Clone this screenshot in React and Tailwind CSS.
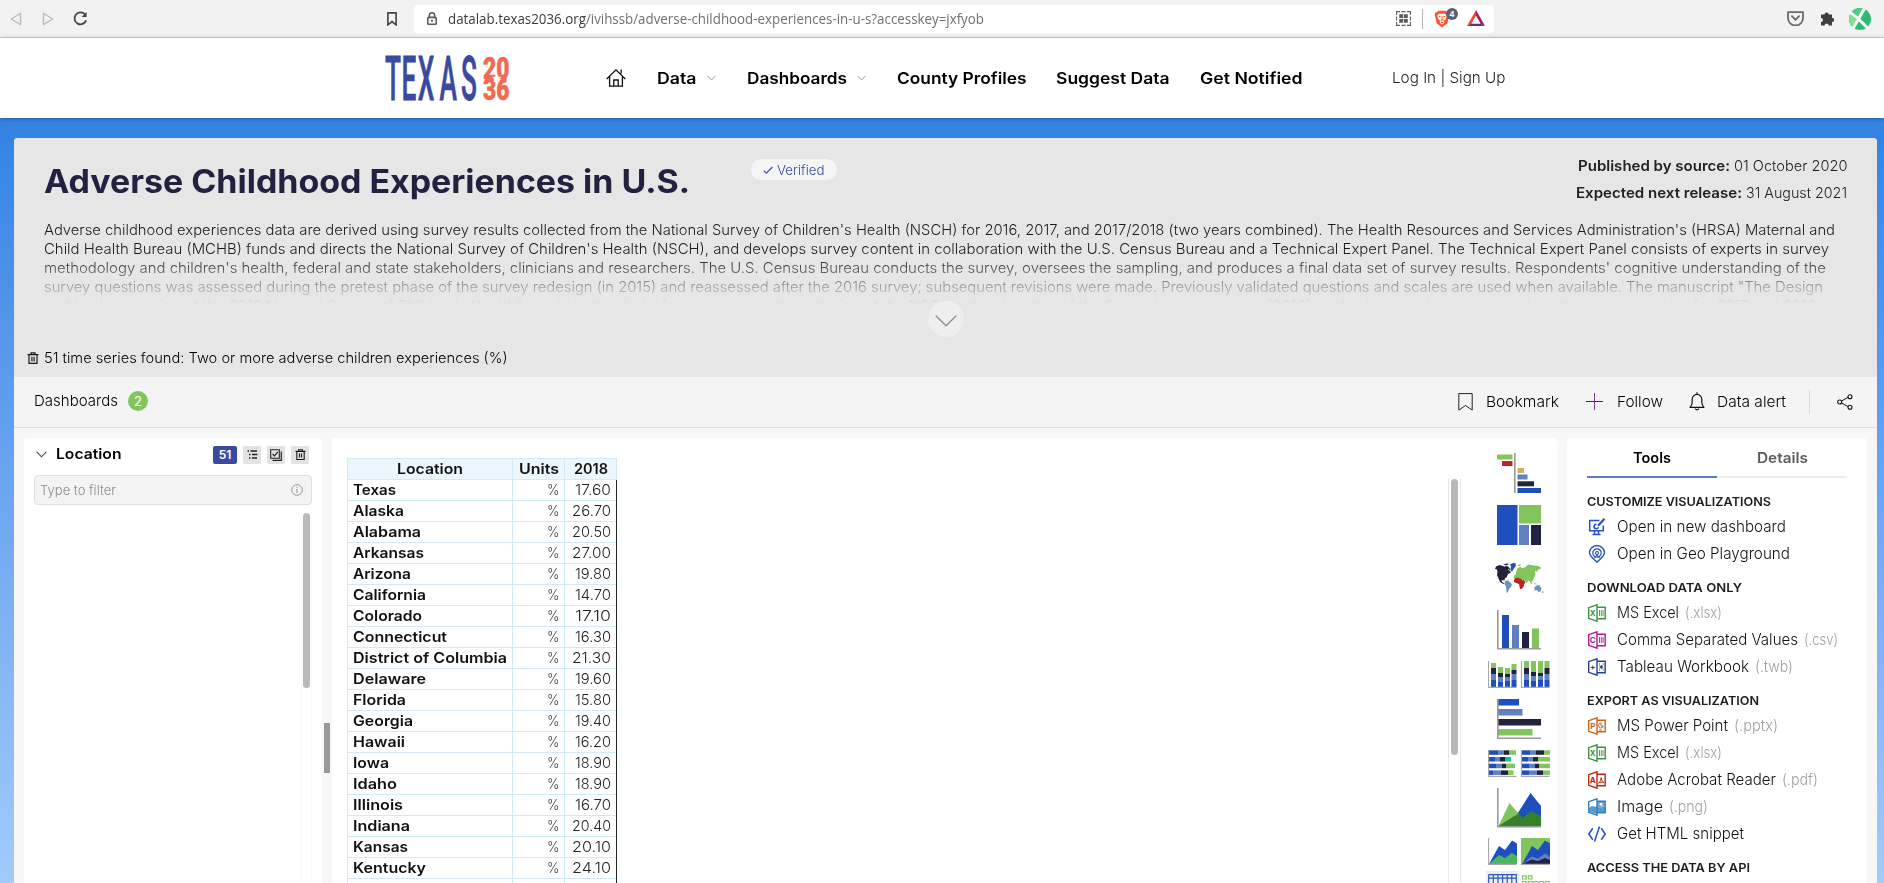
import React, { useLayoutEffect, useRef } from "react";

const BLUE = "#1f4fbf", MID = "#6080c0", NAVY = "#222140", GREEN = "#82c55d", GREY = "#9a9a9a";

/* One line of text, its letters widened so that it fills the given advance width. */
function T({ w, className = "", children }) {
  const box = useRef(null);
  const ink = useRef(null);
  useLayoutEffect(() => {
    if (!box.current || !w) return;
    ink.current.style.transform = "none";
    const natural = ink.current.getBoundingClientRect().width;
    box.current.style.width = w + "px";
    ink.current.style.transform = `scaleX(${w / natural})`;
  }, [w, children]);
  return (
    <span ref={box} className={"inline-block shrink-0 whitespace-nowrap text-left align-top " + className}>
      <span ref={ink} className="inline-block origin-left align-top">{children}</span>
    </span>
  );
}

function Svg({ w, h, className = "", children }) {
  return <svg width={w} height={h} viewBox={`0 0 ${w} ${h}`} fill="none" className={"block shrink-0 " + className}>{children}</svg>;
}

const Trash = ({ s = 12 }) => (
  <svg width={s} height={s} viewBox="0 0 12 12" fill="none" stroke="#1a1a1a" strokeWidth="1.2" className="block shrink-0">
    <path d="M.5 2.6h11M4 2.4V.8h4v1.6M2 2.8v8.6h8V2.8M4.9 4.8v4.6M7.1 4.8v4.6" />
  </svg>
);

function BrowserBar() {
  return (
    <div className="flex h-[38px] items-center border-b border-[#d2d2d2] bg-[#f2f2f2]">
      <Svg w={12} h={14} className="ml-2.5"><path d="M10.5 1.3v11.4L1.2 7z" stroke="#bdbdbd" strokeWidth="1.4" strokeLinejoin="round" /></Svg>
      <Svg w={12} h={14} className="ml-5"><path d="M1.5 1.3v11.4L10.8 7z" stroke="#bdbdbd" strokeWidth="1.4" strokeLinejoin="round" /></Svg>
      <Svg w={15} h={15} className="ml-[19px]">
        <path d="M11.9 3.2A6 6 0 1 0 13.2 9.4" stroke="#444" strokeWidth="1.8" /><path d="M13.6.9v5.2H8.6z" fill="#444" />
      </Svg>
      <Svg w={10} h={14} className="ml-[299px]"><path d="M.9.9h8.2v12L5 9.6.9 12.9z" stroke="#444" strokeWidth="1.6" /></Svg>
      <div className="ml-[17px] flex h-7 w-[1080px] items-center rounded bg-white">
        <Svg w={10} h={13} className="ml-[13px]">
          <path d="M2.4 5.5V3.4a2.6 2.6 0 0 1 5.2 0v2.1" stroke="#5c5c5c" strokeWidth="1.6" />
          <rect x=".8" y="5.4" width="8.4" height="6.8" rx=".8" stroke="#5c5c5c" strokeWidth="1.6" /><circle cx="5" cy="8.8" r="1.1" fill="#5c5c5c" />
        </Svg>
        <T w={536} className="ml-[11px] font-['Open_Sans',sans-serif] text-[14px] leading-[18px] text-[#707070]">
          <span className="text-[#3c3c3c]">datalab.texas2036.org</span>/ivihssb/adverse-childhood-experiences-in-u-s?accesskey=jxfyob
        </T>
        <Svg w={15} h={15} className="ml-[412px]">
          <path d="M.6 4V.6H4M11 .6h3.4V4M14.4 11v3.4H11M4 14.4H.6V11M5.5.6h4M5.5 14.4h4M.6 5.5v4M14.4 5.5v4" stroke="#5c5c5c" strokeWidth="1.1" />
          <path d="M3.2 3.2h3.900v3.900H3.200zM7.900 3.200h3.900v3.900H7.900zM3.200 7.900h3.900v3.900H3.200zM7.900 7.900h3.900v3.900H7.900z" fill="#5c5c5c" />
        </Svg>
        <div className="ml-[11px] h-5 w-px bg-[#b5b5b5]" />
        <div className="relative ml-[11px]">
          <Svg w={16} h={18}>
            <path d="M4.300.800h7.400l1.300 1.400 1.800.400.600 2.600-.600 1.200-1.400 6.800L8 17.600l-5.400-4.400L1.200 6.400.600 5.200l.6-2.600 1.800-.400z" fill="#fb542b" />
            <path d="M5 3.800h6l1.800 1.700-.900 3.600L9.500 11.300l.900 1.400L8 14.500l-2.400-1.800.900-1.400-2.400-2.200-.900-3.600z" fill="#fff" />
            <path d="M4.600 6.300l2 .500M11.400 6.300l-2 .500M8 6v4.200M6.500 10.200h3M6.800 12.500h2.400" stroke="#fb542b" strokeWidth="1" />
          </Svg>
          <div className="absolute -top-[2px] left-3 flex h-3 w-3 items-center justify-center rounded-full bg-[#5f6170] font-['Inter',sans-serif] text-[8px] font-bold text-white">4</div>
        </div>
        <Svg w={18} h={17} className="ml-[17px]">
          <path d="M9 0L0 16l4.500-2.200L9 6z" fill="#ff4724" /><path d="M9 0v6l4.500 7.800L18 16z" fill="#9e1f63" /><path d="M0 16h18l-4.500-2.600h-9z" fill="#662d91" /><path d="M9 5.800L4.600 13.400h8.800z" fill="#fff" />
        </Svg>
      </div>
      <Svg w={17} h={15} className="ml-[293px]">
        <path d="M1 1.200h15V7a7.200 7.200 0 0 1-15 0z" stroke="#6a6a6a" strokeWidth="1.800" strokeLinejoin="round" /><path d="M4.900 5.200L8.500 8.700l3.600-3.500" stroke="#6a6a6a" strokeWidth="1.800" strokeLinecap="round" />
      </Svg>
      <Svg w={15} h={15} className="ml-4">
        <path d="M1 3.500h3.500a2.100 2.100 0 1 1 4.200 0H12v3.300a2.100 2.100 0 1 1 0 4.200v3.500H8.700a2 2 0 1 0-4.100 0H1v-3.600a2 2 0 1 0 0-4z" fill="#3f3f3f" />
      </Svg>
      <Svg w={22} h={22} className="ml-[14px]">
        <circle cx="11" cy="11" r="11" fill="#2fb874" /><path d="M3 3.500A11 11 0 0 1 15 .800L11 9z" fill="#4fd080" /><path d="M0 11a11 11 0 0 1 1-4.500L8 12l-5 6.500A11 11 0 0 1 0 11z" fill="#7fe096" />
        <path d="M1.500 4.800l7 5.200 10 10M4 20.500L15.500.500" stroke="#fff" strokeWidth="3" />
      </Svg>
    </div>
  );
}

const Caret = ({ className = "" }) => <Svg w={9} h={6} className={className}><path d="M.5.8l4 4.200 4-4.200" stroke="#9a9a9a" /></Svg>;

function SiteHeader() {
  return (
    <header className="relative z-10 flex h-20 items-center bg-white text-base font-semibold leading-5 text-black shadow-[0_1px_5px_rgba(0,0,0,0.3)]">
      <Svg w={126} h={48} className="ml-[385px] overflow-visible">
        <text transform="scale(.43 1)" x="0 38.500 76 126.500 176.500" y="46" fill="#3a4a9f" stroke="#3a4a9f" strokeWidth=".8" fontFamily="Roboto" fontWeight="500" fontSize="61">TEXAS</text>
        <g fill="#f26a50" stroke="#f26a50" strokeWidth=".5" fontFamily="Roboto" fontWeight="900" fontSize="31">
          <text x="98" y="24.500" textLength="26.500" lengthAdjust="spacingAndGlyphs">20</text>
          <text x="98" y="46" textLength="26.500" lengthAdjust="spacingAndGlyphs">36</text>
        </g>
        <path d="M111.500 19.500l1.300 3.300 3.500.2-2.700 2.200.9 3.400-3-1.900-3 1.900.9-3.400-2.700-2.200 3.500-.2z" fill="#fff" />
      </Svg>
      <Svg w={20} h={18} className="ml-[95px]">
        <path d="M.7 10L10 .9 19.300 10M3.600 7.800v9.300h12.800V7.800M7.800 17v-6h4.400v6M15.200 4.600V.500" stroke="#111" strokeWidth="1.300" />
      </Svg>
      <T w={39.500} className="ml-[31px]">Data</T><Caret className="ml-[10px]" />
      <T w={100} className="ml-[31.500px]">Dashboards</T><Caret className="ml-[10px]" />
      <T w={129.500} className="ml-[31px]">County Profiles</T>
      <T w={113.500} className="ml-[29.500px]">Suggest Data</T>
      <T w={102.500} className="ml-[30.500px]">Get Notified</T>
      <T w={113.500} className="ml-[89.500px] text-[15px] font-light text-[#222]">Log In | Sign Up</T>
    </header>
  );
}

const LINES = [
  [1791, "Adverse childhood experiences data are derived using survey results collected from the National Survey of Children's Health (NSCH) for 2016, 2017, and 2017/2018 (two years combined). The Health Resources and Services Administration's (HRSA) Maternal and"],
  [1785, "Child Health Bureau (MCHB) funds and directs the National Survey of Children's Health (NSCH), and develops survey content in collaboration with the U.S. Census Bureau and a Technical Expert Panel. The Technical Expert Panel consists of experts in survey"],
  [1782, "methodology and children's health, federal and state stakeholders, clinicians and researchers. The U.S. Census Bureau conducts the survey, oversees the sampling, and produces a final data set of survey results. Respondents' cognitive understanding of the"],
  [1779, "survey questions was assessed during the pretest phase of the survey redesign (in 2015) and reassessed after the 2016 survey; subsequent revisions were made. Previously validated questions and scales are used when available. The manuscript \"The Design"],
  [1772, "and Implementation of the 2016 National Survey of Children's Health\" provides detailed information about the redesign of the NSCH, administration of the first redesigned survey (2016), and subsequent revisions made to the survey content for 2017 and 2018"],
];

function Summary() {
  return (
    <section className="relative h-[239px] bg-[#e6e6e6] pt-[22px]">
      <div className="flex h-[60px] items-start pl-[30px] pr-[30px]">
        <h1 className="flex"><T w={646} className="mt-[2px] text-[32px] font-bold leading-[40px] text-[#222140]">Adverse Childhood Experiences in U.S.</T></h1>
        <div className="ml-[61px] mt-[-1px] flex h-[21px] w-[86px] items-center rounded-full bg-[#f5f5f5] text-[13px] font-light leading-4 text-[#3a4a9f]">
          <Svg w={10} h={8} className="ml-3 mr-[4px]"><path d="M.7 4.600L3.300 7.200 9.400 1" stroke="#3a4a9f" strokeWidth="1.100" /></Svg>
          <T w={47.500}>Verified</T>
        </div>
        <div className="ml-auto -mt-[8px] flex flex-col items-end text-[14.500px] font-light leading-[27px] text-[#222]">
          <div className="flex justify-end gap-1"><T w={152} className="font-semibold">Published by source:</T><T w={113.500}>01 October 2020</T></div>
          <div className="flex justify-end gap-1"><T w={166} className="font-semibold">Expected next release:</T><T w={101}>31 August 2021</T></div>
        </div>
      </div>
      <div className="ml-[30px] h-[84px] overflow-hidden text-[14.500px] font-light leading-[19px] text-[#1c1c1c] [mask-image:linear-gradient(to_bottom,black_36px,transparent_84px)]">
        {LINES.map(([w, t]) => <div key={w} className="flex h-[19px]"><T w={w}>{t}</T></div>)}
      </div>
      <div className="absolute left-[914px] top-[163px] flex h-9 w-9 items-center justify-center rounded-full bg-[#eeeeee] pt-1">
        <Svg w={22} h={12}><path d="M.8.8L11 10.800 21.200.800" stroke="#8a8a8a" strokeWidth="1.300" /></Svg>
      </div>
      <div className="ml-[13px] mt-[44px] flex items-center text-[14.500px] font-light leading-5 text-black">
        <Trash /><T w={463.500} className="ml-[5px]">51 time series found: Two or more adverse children experiences (%)</T>
      </div>
    </section>
  );
}

function Toolbar() {
  return (
    <div className="flex h-[51px] items-center border-b border-[#dedede] bg-[#f4f4f4] pb-px text-[15px] font-light leading-5 text-black">
      <T w={84} className="-mt-px ml-5">Dashboards</T>
      <div className="-mt-px ml-[10px] flex h-5 w-5 items-center justify-center rounded-full bg-[#82c55d] text-[13px] font-normal text-white">2</div>
      <Svg w={15} h={18} className="ml-auto"><path d="M.8.6h13.400v16.500L7.500 12.500.8 17.100z" stroke="#222" /></Svg>
      <T w={73} className="ml-[13px]">Bookmark</T>
      <Svg w={17} h={17} className="ml-[27px]"><path d="M0 8.500h17" stroke="#333" /><path d="M8.500 0v17" stroke="#7a3d96" /></Svg>
      <T w={46} className="ml-[14px]">Follow</T>
      <Svg w={16} h={19} className="ml-[26px]">
        <path d="M1 15.300c1.700-1.700 2.200-3 2.200-5V7.200a4.800 4.800 0 0 1 9.600 0v3.100c0 2 .5 3.300 2.200 5zM8 2.200V.300M6.200 16.500c.300 1.700 3.300 1.700 3.600 0" stroke="#111" strokeWidth="1.200" strokeLinejoin="round" />
      </Svg>
      <T w={69} className="ml-[12px]">Data alert</T>
      <div className="ml-[23px] h-6 w-px bg-[#d8d8d8]" />
      <Svg w={16} h={16} className="ml-[27px] mr-6">
        <path d="M4.500 7l6.500-3.600M4.500 9l6.500 3.600" stroke="#111" /><circle cx="2.700" cy="8" r="2" stroke="#111" strokeWidth="1.100" /><circle cx="13" cy="2.700" r="2" stroke="#111" strokeWidth="1.100" /><circle cx="13" cy="13.300" r="2" stroke="#111" strokeWidth="1.100" />
      </Svg>
    </div>
  );
}

const Chip = ({ children }) => <div className="ml-1.5 flex h-[18px] w-[18px] items-center justify-center rounded-xs bg-[#e2e2e2]">{children}</div>;

function LocationPanel() {
  return (
    <aside className="w-[298px] rounded-t bg-white">
      <div className="flex h-[33px] items-center pl-3">
        <Svg w={11} h={7}><path d="M.7.8l4.800 5 4.800-5" stroke="#444" strokeWidth="1.100" /></Svg>
        <T w={65.500} className="-mt-px ml-[9px] text-[14.500px] font-semibold leading-5 text-black">Location</T>
        <div className="ml-auto flex h-[18px] w-6 items-center justify-center rounded-xs bg-[#3a4a9f] text-[12px] font-semibold text-white">51</div>
        <Chip><Svg w={11} h={11}><path d="M.5 2h1.500M3.500 2H10M2 5.500h1.500M5 5.500h5.500M2 9h1.500M5 9h5" stroke="#222" strokeWidth="1.300" /></Svg></Chip>
        <Chip><Svg w={12} h={12}><path d="M.7.7h8.600v8.600H.7z" stroke="#222" strokeWidth="1.100" /><path d="M11.300 2.500v8.800H2.500M2.600 5l1.900 1.900 3.300-4.100" stroke="#222" strokeWidth="1.200" /></Svg></Chip>
        <Chip><Trash s={11} /></Chip>
        <div className="w-[13px]" />
      </div>
      <div className="ml-2.5 mt-1 flex h-[30px] w-[278px] items-center rounded border border-[#dfdfdf] bg-[#f3f3f3] pl-[5px] pr-2">
        <T w={76} className="text-[13px] font-light leading-4 text-[#8c8c8c]">Type to filter</T>
        <Svg w={12} h={12} className="ml-auto"><circle cx="6" cy="6" r="5.300" stroke="#999" /><path d="M6 5v4M6 2.800v1.200" stroke="#999" strokeWidth="1.100" /></Svg>
      </div>
      <div className="ml-[277px] mt-2 h-[370px] w-[11px] border-x border-[#f8f8f8] pl-px">
        <div className="h-[175px] w-[7px] rounded-full bg-[#b9b9b9]" />
      </div>
    </aside>
  );
}

const ROWS = [
  ["Texas", 43, "17.60"], ["Alaska", 51, "26.70"], ["Alabama", 68, "20.50"], ["Arkansas", 71, "27.00"], ["Arizona", 58, "19.80"],
  ["California", 73, "14.70"], ["Colorado", 69, "17.10"], ["Connecticut", 94, "16.30"], ["District of Columbia", 154, "21.30"],
  ["Delaware", 73, "19.60"], ["Florida", 53, "15.80"], ["Georgia", 60, "19.40"], ["Hawaii", 52, "16.20"], ["Iowa", 36, "18.90"],
  ["Idaho", 44, "18.90"], ["Illinois", 50, "16.70"], ["Indiana", 57, "20.40"], ["Kansas", 55, "20.10"], ["Kentucky", 73, "24.10"], ["Louisiana", 69, "23.70"],
];

function DataTable() {
  return (
    <div className="ml-[15px] mt-5 w-[270px] self-start text-[14.500px] leading-[20px]">
      <div className="grid h-[22px] grid-cols-[165px_52px_52px] border border-r-0 border-[#d0ebf6] bg-[#ebf7fd] font-semibold text-[#111]">
        <div className="flex justify-center border-r border-[#d0ebf6]"><T w={66}>Location</T></div>
        <div className="flex justify-center border-r border-[#d0ebf6]"><T w={40}>Units</T></div>
        <div className="flex justify-center border-r border-[#d0ebf6]"><T w={34}>2018</T></div>
      </div>
      <div className="w-[270px] border-l border-r border-l-[#d0ebf6] border-r-[#222]">
        {ROWS.map(([name, w, v]) => (
          <div key={name} className="grid h-[21px] grid-cols-[165px_52px_51px] border-b border-[#d0ebf6]">
            <div className="border-r border-[#d0ebf6] pl-[5px] font-semibold text-[#111]"><T w={w}>{name}</T></div>
            <div className="flex justify-end border-r border-[#d0ebf6] pr-[5px] font-light text-[#444]"><T w={12.500}>%</T></div>
            <div className="flex justify-end pr-[5px] font-light text-[#222]"><T w={v[0] === "2" ? 39 : 36}>{v}</T></div>
          </div>
        ))}
      </div>
    </div>
  );
}

const R = ({ x, y, w, h, c }) => <rect x={x} y={y} width={w} height={h} fill={c} />;
const Axes = ({ x = 0, w = 29, h = 27 }) => <path d={`M${x + 0.5} 0v${h - 0.7}h${w}`} stroke="#a8a8a8" strokeWidth="1.200" />;

const STACK = [[2, [7, 6, 6, 5]], [9, [5, 5, 4, 6]], [16, [6, 4, 3, 6]], [22.5, [7, 6, 4, 6]]];
const STACK_FULL = [[7, 6, 6, 7], [6, 5, 4, 11], [7, 4, 3, 12], [7, 6, 6, 7]];
const SHADES = [BLUE, MID, NAVY, GREEN];
const SIDE = [[9, 6, 5, 7], [6, 5, 5, 6], [7, 6, 4, 9], [4, 8, 7, 5.5]];
const SIDE_FULL = [[8, 6, 8, 7], [6, 5, 5, 12], [7, 6, 4, 11], [7, 8, 6, 7]];

function upright(parts, x, key) {
  let y = 26;
  return parts.map((h, i) => { y -= h; return <R key={key + i} x={x} y={y} w={5} h={h} c={SHADES[i]} />; });
}
function sideways(parts, x0, y, key) {
  let x = x0;
  return parts.map((w, i) => { const r = <R key={key + i} x={x} y={y} w={w} h={4.5} c={key === "s1" && i === 3 ? "#0bc97e" : SHADES[i]} />; x += w; return r; });
}

function WorldMap() {
  return (
    <Svg w={50} h={32}>
      <path d="M1 6l1-2.500 3.500-1.500 5 1.500 3-.5 1.500 2.500-1 1.500 1.500.5 1.500 2-3 1.500-1.500 3.500-1.500.5-.5 2.500-3-.5.5 2 2.500 1.500-1 .5-3.500-2-1.500-3.500-1.500-3.500.5-3.500L3 6.500z" fill={NAVY} />
      <path d="M9 1.500l4-1 2 .5-2.500 1.500zM14 3l1.500 2 1.500 3-2.500-2z" fill={NAVY} />
      <path d="M16 1.500l3-1.500 3 .5-.5 3-2 2.500-1.500 3-1.500-2.500.5-3z" fill={BLUE} />
      <path d="M11 18l3-.5 4 3.500-1 3-2 2-1.500 4-1-1-.5-5.500-1.500-2.500z" fill="#6d8fc8" />
      <path d="M20 17l1.500-2.500 3-1 4.500 1 1.500 3.500 1 1-1.500 2.500-.5 2.500-2 2h-1.500l-1-5-3-1-2-1z" fill="#c11f22" />
      <path d="M22 9l1.500-3.500 3-2 1 1.500 3.500-.5 3-3 3 .5 3 .5 4 .5 3 1.500-.5 1.500-2.500.5-1 3-1-2-1 1 .5 3-1.500 3.500-1 3-1.500 0 1 2.500-1 .5-2-3-1.500-.5-1 3-2.500-3.500-2 .5-2-2-2.500-.5-2-.5-2.500 1 .5-3 2-1z" fill={GREEN} />
      <path d="M24 3l1.500-2 1.500.5-1 1.500zM38.500 19l3 1.500 2 .5-2 .5z" fill={GREEN} />
      <path d="M40.500 24l2.500-1.500 1-.5 1.500.5 2 3-1 3-2 .5-1.500-2-2.500.5zM48.500 28l1.500 1-2 1.500z" fill="#6d8fc8" />
    </Svg>
  );
}

function ChartPicker() {
  return (
    <div className="flex w-[65px] flex-col items-center pt-[15px]">
      <Svg w={44} h={40}>
        <R x={0} y={1.5} w={15.5} h={5} c={GREEN} /><R x={5} y={8} w={10.5} h={5} c="#c32424" /><R x={17} y={0} w={1.6} h={40} c={GREY} />
        <R x={20.5} y={15} w={6.5} h={5} c="#c4b65a" /><R x={20.5} y={21.5} w={10} h={5} c={MID} /><R x={20.5} y={28.3} w={16.5} h={5} c={NAVY} /><R x={20.5} y={35} w={23.5} h={5} c={BLUE} />
      </Svg>
      <Svg w={44} h={40} className="mt-3">
        <R x={0} y={0} w={20.5} h={40} c={BLUE} /><R x={22} y={0} w={22} h={18.5} c={GREEN} /><R x={22} y={20} w={10} h={20} c={MID} /><R x={34} y={20} w={10} h={20} c={NAVY} />
      </Svg>
      <div className="mt-[18px]"><WorldMap /></div>
      <Svg w={44} h={40} className="mt-[15px]">
        <R x={5} y={5} w={7} h={33} c={BLUE} /><R x={15} y={15} w={7} h={23} c={MID} /><R x={25} y={22} w={7} h={16} c={NAVY} /><R x={35} y={18.5} w={7} h={19.5} c={GREEN} />
        <path d="M.8 0v38.700H44" stroke={GREY} strokeWidth="1.600" />
      </Svg>
      <Svg w={62} h={27} className="mt-[11px]">
        {STACK.map(([x, p], i) => upright(p, x + 1, "a" + i))}{STACK_FULL.map((p, i) => upright(p, STACK[i][0] + 34, "b" + i))}
        <Axes w={28} /><Axes x={33} w={28} />
      </Svg>
      <Svg w={44} h={40} className="mt-[11px]">
        <R x={1} y={0} w={21} h={6.5} c={BLUE} /><R x={1} y={10} w={24.5} h={6.5} c={MID} /><R x={1} y={20} w={43} h={6.5} c={NAVY} /><R x={1} y={30} w={34.5} h={6.5} c={GREEN} />
        <path d="M.8 0v39.200H44" stroke={GREY} strokeWidth="1.600" />
      </Svg>
      <Svg w={62} h={27} className="mt-[11px]">
        {SIDE.map((p, i) => sideways(p, 1, i * 6.7 + 0.3, "s" + i))}{SIDE_FULL.map((p, i) => sideways(p, 34, i * 6.7 + 0.3, "f" + i))}
        <Axes w={28} /><Axes x={33} w={28} />
      </Svg>
      <Svg w={44} h={40} className="mt-[11px]">
        <path d="M1.500 38l20-14L33.500 5 44 18v20z" fill={BLUE} /><path d="M1.500 38l11-23 9 10.500 1 4z" fill={GREEN} /><path d="M1.500 38l20-12.500 4 4.800L34 23l10 5v10z" fill="#37802b" />
        <path d="M.8 0v38.800H44" stroke={GREY} strokeWidth="1.600" />
      </Svg>
      <Svg w={62} h={27} className="mt-2.5">
        <path d="M1 26L11 8l6 4 7-9.500 5 3V26z" fill={BLUE} /><path d="M1 26l10-9 6 3 7-5 5 3v8z" fill="#4bb561" />
        <R x={33} y={0} w={29} h={26.5} c={GREEN} /><path d="M34 26L44 8l6 4 7-9.500 5 3V26z" fill={BLUE} /><path d="M34 26l10-7.500 6 2 7-5 5 3.500v7z" fill={MID} /><path d="M34 26l10-4.500 6 1.500 7-3 5 2v4z" fill={NAVY} />
        <Axes w={28} /><Axes x={33} w={28} />
      </Svg>
      <div className="mt-1.5 flex h-[13px] w-full overflow-hidden">
        <div className="h-[13px] w-[33px] bg-[#e9eef9] pl-0.5 pt-[3px]">
          <Svg w={29} h={20}><path d="M.7.7h27.600v20M.7.7v20M.7 4.200h27.600M.7 9.500h27.600M5.300.7v20M10 .7v20M14.600.7v20M19.200.7v20M23.800.7v20" stroke="#2c57bd" strokeWidth="1.200" /></Svg>
        </div>
        <Svg w={29} h={12} className="ml-[3px] mt-1">
          <g stroke={GREEN} strokeWidth="1.200"><path d="M.6.8h3.600v3.200H.6zM6.300.8h3.600v3.200H6.300zM.6 6.500h3.600v4H.6zM6.300 6.500h3.600v4H6.300zM12 6.500h3.600v4H12zM17.700 6.500h3.600v4h-3.600zM23.400 6.500H27v4h-3.600z" /></g>
        </Svg>
      </div>
    </div>
  );
}

function FileIcon({ c, letter, kind }) {
  return (
    <Svg w={18} h={18}>
      <path d="M9 .8v16.400L.7 14.300V3.700zM9 3.300h8.200v11.400H9" stroke={c} strokeWidth="1.400" />
      <text x="4.800" y="11.800" textAnchor="middle" fontFamily="Inter" fontWeight="700" fontSize="8" fill={c}>{letter}</text>
      {kind === "grid" && <path d="M11.500 6v6M13.300 6v6M15.100 6v6" stroke={c} strokeWidth=".9" />}
      {kind === "x" && <path d="M11 6h1M11 12h1M14.700 6h1M14.700 12h1M11.300 9h4M13.300 7v4M11.800 7.500l3 3M14.800 7.500l-3 3" stroke={c} />}
      {kind === "pie" && <path d="M13 6a2.500 2.500 0 1 0 2.500 3H13zM11 13h3" stroke={c} />}
      {kind === "pdf" && <path d="M10.500 12c2-1 2.500-3.500 2.600-5.500.2 2.500 1 4 3 5-2-.5-4-.4-5.600.5z" stroke={c} />}
      {kind === "img" && <><path d="M1 10l3-2 5 1 3 1 3.500-2 1.700 1.500v5H9V16l-8-2z" fill={c} opacity=".8" /><path d="M9 4h8v5l-2-1.500-3 2.500-3-1z" fill={c} opacity=".7" /><circle cx="13" cy="6.300" r="1.400" fill="#fff" /></>}
    </Svg>
  );
}

const Monitor = () => (
  <Svg w={18} h={18}><path d="M11.500 2.500H1.700v10.300h13.600V7.500M6.500 13v3.300M10.500 13v3.300M4.500 16.400h8" stroke="#2950c0" strokeWidth="1.500" /><path d="M16.500.8L10 7.800" stroke="#2950c0" strokeWidth="2.200" /><path d="M8.500 6.300a2.200 2.200 0 1 0 1.800 3" stroke="#2950c0" strokeWidth="1.600" /></Svg>
);
const Pin = () => (
  <Svg w={18} h={18}><path d="M9 17.200C5.500 13.800 1.500 11.300 1.500 7.600a7.500 7 0 0 1 15 0c0 3.700-4 6.200-7.500 9.600z" stroke="#2950c0" strokeWidth="1.400" /><circle cx="9" cy="8" r="4.200" stroke="#2950c0" strokeWidth="1.200" /><circle cx="9" cy="8" r="1.500" stroke="#2950c0" strokeWidth="1.200" /><path d="M6 13.500l3-3.500 3 3.500" stroke="#2950c0" /></Svg>
);
const Code = () => <Svg w={18} h={18}><path d="M4.800 3.200L.8 9l4 5.800M13.200 3.200l4 5.800-4 5.800M11.500 1.500l-5 15" stroke="#2950c0" strokeWidth="1.500" /></Svg>;

const GROUPS = [
  ["CUSTOMIZE VISUALIZATIONS", 184, [[<Monitor />, "Open in new dashboard", 169], [<Pin />, "Open in Geo Playground", 173]]],
  ["DOWNLOAD DATA ONLY", 155, [
    [<FileIcon c="#3f9142" letter="X" kind="grid" />, "MS Excel", 62, "(.xlsx)", 37],
    [<FileIcon c="#b0179c" letter="C" kind="grid" />, "Comma Separated Values", 181, "(.csv)", 34],
    [<FileIcon c="#26408f" letter="+" kind="x" />, "Tableau Workbook", 132, "(.twb)", 38],
  ]],
  ["EXPORT AS VISUALIZATION", 172, [
    [<FileIcon c="#c8641a" letter="P" kind="pie" />, "MS Power Point", 111, "(.pptx)", 44],
    [<FileIcon c="#3f9142" letter="X" kind="grid" />, "MS Excel", 62, "(.xlsx)", 37],
    [<FileIcon c="#b8260f" letter="A" kind="pdf" />, "Adobe Acrobat Reader", 159, "(.pdf)", 36],
    [<FileIcon c="#2f7fbf" letter="" kind="img" />, "Image", 46, "(.png)", 39],
    [<Code />, "Get HTML snippet", 127],
  ]],
  ["ACCESS THE DATA BY API", 163, []],
];

function ToolsPanel() {
  return (
    <aside className="w-[300px] rounded-t bg-white px-5">
      <div className="flex h-10 text-[14.500px] font-semibold leading-[40px]">
        <div className="flex w-[130px] justify-center border-b-2 border-[#5b7dc8] text-black"><T w={38}>Tools</T></div>
        <div className="flex w-[130px] justify-center border-b-2 border-[#ececec] text-[#5c5c5c]"><T w={51}>Details</T></div>
      </div>
      <div className="pt-[11px]">
        {GROUPS.map(([title, w, items]) => (
          <section key={title} className="mb-2">
            <h2 className="flex h-6 items-center pt-0.5 text-[12px] font-semibold leading-[22px] text-[#1c1c1c]"><T w={w}>{title}</T></h2>
            {items.map(([icon, name, nw, ext, ew], i) => (
              <div key={i} className="flex h-[27px] items-center text-[15.500px] font-light leading-[27px] text-[#111]">
                <span className="ml-px mr-[11px] flex">{icon}</span><T w={nw}>{name}</T>
                {ext && <T w={ew} className="ml-1.5 text-[#a0a0a0]">{ext}</T>}
              </div>
            ))}
          </section>
        ))}
      </div>
    </aside>
  );
}

export default function App() {
  return (
    <div className="h-[883px] w-[1884px] overflow-hidden font-['Inter',sans-serif]">
      <BrowserBar />
      <SiteHeader />
      <div className="h-[765px] bg-linear-to-b from-[#3584e4] from-3% to-[#a3cafc] pl-3.5 pr-[7px] pt-5">
        <div className="flex h-[745px] flex-col overflow-hidden rounded-t bg-[#f7f7f7]">
          <Summary />
          <Toolbar />
          <div className="mt-2.5 flex h-[445px] pl-2.5">
            <LocationPanel />
            <div className="flex w-2.5 justify-center pt-[285px]"><div className="h-[50px] w-1.5 bg-[#999]" /></div>
            <main className="flex w-[1225px] overflow-hidden rounded-t bg-white">
              <DataTable />
              <div className="ml-auto mt-[41px] w-[13px] border-x border-[#e6e6e6] pl-[2px]"><div className="h-[276px] w-[7px] rounded-full bg-[#b9b9b9]" /></div>
              <div className="ml-[25px] mr-[6px]"><ChartPicker /></div>
            </main>
            <div className="w-2.5" />
            <ToolsPanel />
          </div>
        </div>
      </div>
    </div>
  );
}
